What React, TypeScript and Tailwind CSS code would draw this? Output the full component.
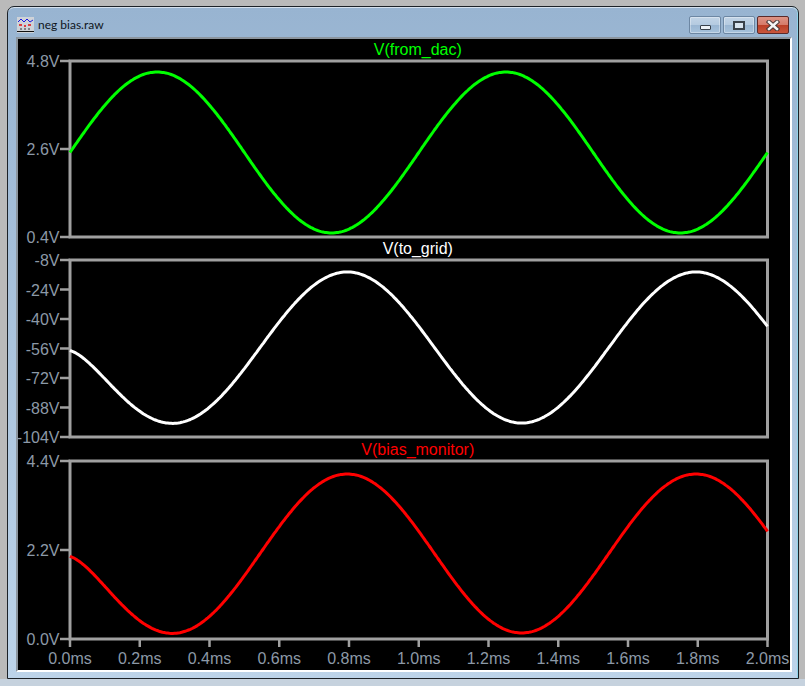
import React from 'react';

const AXIS = '#a0a0a0';
const LABEL = '#8c99a7';
const LEFT = 52;
const RIGHT = 749.5;

interface PlotProps {
  title: string;
  color: string;
  height: number;
  top: number;
  bottom: number;
  ticks: string[];
  center: number;
  amp: number;
  phase: number;
  kick: number;
  xAxis?: boolean;
}

// plot coordinates are relative to the svg of each panel
const Plot: React.FC<PlotProps> = ({ title, color, height, top, bottom, ticks, center, amp, phase, kick, xAxis }) => {
  const pts: string[] = [];
  for (let i = 0; i <= 400; i++) {
    const t = i / 200;
    const y = center - amp * Math.sin(2 * Math.PI * (t - phase)) + kick * Math.exp(-t / 0.07);
    pts.push(`${(LEFT + (t / 2) * (RIGHT - LEFT)).toFixed(1)},${y.toFixed(1)}`);
  }
  const step = (bottom - top) / (ticks.length - 1);
  return (
    <svg width={772} height={height} className="block shrink-0 overflow-visible" style={{ fontFamily: '"Liberation Sans", Arial, sans-serif' }}>
      <text x={(LEFT + RIGHT) / 2 - 1} y={top - 6} textAnchor="middle" fontSize={16} fill={color}>{title}</text>
      <rect x={LEFT} y={top} width={RIGHT - LEFT} height={bottom - top} fill="none" stroke={AXIS} strokeWidth={3} />
      {ticks.map((label, i) => {
        const y = top + i * step;
        return (
          <g key={label}>
            <line x1={42} x2={LEFT} y1={y} y2={y} stroke={AXIS} strokeWidth={2.5} />
            <text x={41.5} y={y + 6} textAnchor="end" fontSize={16} fill={LABEL}>{label}</text>
          </g>
        );
      })}
      {xAxis && Array.from({ length: 11 }).map((_, i) => {
        const x = LEFT + (i * (RIGHT - LEFT)) / 10;
        return (
          <g key={i}>
            <line x1={x} x2={x} y1={bottom} y2={bottom + 8} stroke={AXIS} strokeWidth={2.5} />
            <text x={x} y={bottom + 25} textAnchor="middle" fontSize={16} fill={LABEL}>{(i * 0.2).toFixed(1)}ms</text>
          </g>
        );
      })}
      <polyline points={pts.join(' ')} fill="none" stroke={color} strokeWidth={3} strokeLinejoin="round" />
    </svg>
  );
};

const AppIcon = () => (
  <svg width={17} height={16} viewBox="0 0 17 16" className="shrink-0">
    <rect x={0} y={0} width={17} height={16} fill="#cfd3d8" />
    <path d="M1 5 L4 2 L7 5 L10 2 L13 5 L16 3" fill="none" stroke="#1a1ae0" strokeWidth={1} />
    <path d="M2 8h3M7 9h2M11 8h3" stroke="#e01010" strokeWidth={1.5} fill="none" />
    <path d="M0 14.5h17" stroke="#111" strokeWidth={1} />
    <path d="M4 11v2M8 11v2M12 11v2" stroke="#333" strokeWidth={1} />
  </svg>
);

const WinButton: React.FC<{ children: React.ReactNode }> = ({ children }) => (
  <div className="flex h-[18px] w-[32px] items-center justify-center rounded-[2px] border border-[#6d87a3] bg-[linear-gradient(180deg,#c2d4e6_0%,#b4cae0_50%,#9ab6d2_52%,#a6c2dc_100%)] shadow-[inset_0_0_0_1px_rgba(255,255,255,0.35)]">
    {children}
  </div>
);

export default function App() {
  return (
    <div className="flex h-[686px] w-[805px] flex-col overflow-hidden bg-[#c6d2de]">
      <div className="flex h-[679px] shrink-0 bg-[#bababa] pl-[7px] pt-[6px]">
        <div className="flex w-[792px] flex-col rounded-t-[7px] border border-[#1c2228] bg-gradient-to-b from-[#98b4d1] via-[#abc4dd] to-[#bdd4ea] pl-[8px] pr-[6px] shadow-[inset_0_1px_0_rgba(255,255,255,0.6),inset_-1px_0_0_#8fd3e8]">
          {/* title bar */}
          <div className="flex h-[30px] shrink-0 items-start">
            <div className="ml-[1px] mt-[10px] flex items-center gap-[4px]">
              <AppIcon />
              <span className="text-[12px] leading-[16px] text-[#10161c]" style={{ fontFamily: 'Lato, "Noto Sans", sans-serif' }}>neg bias.raw</span>
            </div>
            <div className="ml-auto mr-[3px] mt-[9px] flex gap-[2px]">
              <WinButton>
                <div className="mt-[4px] h-[5px] w-[11px] rounded-[1px] border border-[#39414a] bg-[#eef2f6]" />
              </WinButton>
              <WinButton>
                <div className="flex h-[9px] w-[12px] items-center justify-center border-2 border-[#39414a] bg-[#d8e4ef]" />
              </WinButton>
              <div className="flex h-[18px] w-[32px] items-center justify-center rounded-[2px] border border-[#5b2a2a] bg-[linear-gradient(180deg,#dd9486_0%,#d67a69_50%,#bb3f27_52%,#c9563c_100%)]">
                <svg width={14} height={11} viewBox="0 0 14 11">
                  <path d="M3 2 L11 9 M11 2 L3 9" stroke="#4a3a3a" strokeWidth={4.5} strokeLinecap="square" fill="none" />
                  <path d="M3 2 L11 9 M11 2 L3 9" stroke="#f4f4f4" strokeWidth={2.5} strokeLinecap="square" fill="none" />
                </svg>
              </div>
            </div>
          </div>
          {/* client area */}
          <div className="mb-[6px] flex min-h-0 flex-1 flex-col border-2 border-t-[#8c959e] border-r-white border-b-white border-l-[#8c959e] bg-black">
            <Plot title="V(from_dac)" color="#00ff00" height={209} top={22} bottom={198} ticks={['4.8V', '2.6V', '0.4V']} center={113.5} amp={80.5} phase={0} kick={0} />
            <Plot title="V(to_grid)" color="#ffffff" height={201} top={12} bottom={189} ticks={['-8V', '-24V', '-40V', '-56V', '-72V', '-88V', '-104V']} center={99.5} amp={75.5} phase={0.545} kick={24} />
            <Plot title="V(bias_monitor)" color="#ff0000" height={219} top={12} bottom={190} ticks={['4.4V', '2.2V', '0.0V']} center={104.5} amp={79.5} phase={0.545} kick={25} xAxis />
          </div>
        </div>
      </div>
    </div>
  );
}
